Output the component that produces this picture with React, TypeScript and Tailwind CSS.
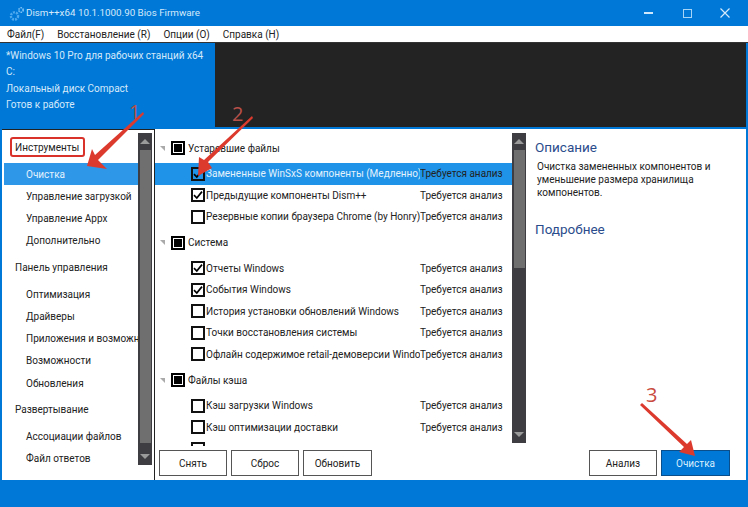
import React from "react";

type Sec = { kind: "s" | "i"; t: string; sel?: boolean };
const left: Sec[] = [
  { kind: "s", t: "Инструменты" },
  { kind: "i", t: "Очистка", sel: true },
  { kind: "i", t: "Управление загрузкой" },
  { kind: "i", t: "Управление Appx" },
  { kind: "i", t: "Дополнительно" },
  { kind: "s", t: "Панель управления" },
  { kind: "i", t: "Оптимизация" },
  { kind: "i", t: "Драйверы" },
  { kind: "i", t: "Приложения и возможности" },
  { kind: "i", t: "Возможности" },
  { kind: "i", t: "Обновления" },
  { kind: "s", t: "Развертывание" },
  { kind: "i", t: "Ассоциации файлов" },
  { kind: "i", t: "Файл ответов" },
];

type Row = { g?: boolean; t: string; c?: boolean; sel?: boolean };
const rows: Row[] = [
  { g: true, t: "Устаревшие файлы" },
  { t: "Замененные WinSxS компоненты (Медленно)", c: true, sel: true },
  { t: "Предыдущие компоненты Dism++", c: true },
  { t: "Резервные копии браузера Chrome (by Honry)" },
  { g: true, t: "Система" },
  { t: "Отчеты Windows", c: true },
  { t: "События Windows", c: true },
  { t: "История установки обновлений Windows" },
  { t: "Точки восстановления системы" },
  { t: "Офлайн содержимое retail-демоверсии Windows" },
  { g: true, t: "Файлы кэша" },
  { t: "Кэш загрузки Windows" },
  { t: "Кэш оптимизации доставки" },
  { t: "" },
];

function Scrollbar({ thumb }: { thumb: string }) {
  return (
    <div className="w-[14px] shrink-0 bg-[#3e3e42] flex flex-col items-center">
      <div className="h-[17px] shrink-0 flex items-center justify-center">
        <div className="w-0 h-0 border-l-[5px] border-r-[5px] border-b-[5px] border-l-transparent border-r-transparent border-b-[#9a9a9a]" />
      </div>
      <div className={`w-[11px] bg-[#6f6f6f] ${thumb}`} />
      <div className="flex-1" />
      <div className="h-[17px] shrink-0 flex items-center justify-center">
        <div className="w-0 h-0 border-l-[5px] border-r-[5px] border-t-[5px] border-l-transparent border-r-transparent border-t-[#9a9a9a]" />
      </div>
    </div>
  );
}

function Btn({ t, w, primary }: { t: string; w: string; primary?: boolean }) {
  return (
    <div
      className={`h-[26px] flex items-center justify-center border ${w} ${
        primary ? "bg-[#0078d7] border-[#0a4f8c] text-[#d8eefc]" : "bg-white border-[#555] text-[#222]"
      }`}
    >
      {t}
    </div>
  );
}

function Check() {
  return (
    <svg width="10" height="10" viewBox="0 0 10 10" fill="none">
      <path d="M1 5.2 L3.8 8 L9 1.6" stroke="#000" strokeWidth="1.7" />
    </svg>
  );
}

export default function App() {
  return (
    <div className="relative w-[748px] h-[507px] overflow-hidden bg-[#0078d7] flex flex-col font-['Roboto',sans-serif] text-[10px] text-[#222]">
      <div className="h-[26px] shrink-0 flex items-center pl-[8px] text-[#d4e9fa] text-[9.8px]">
        <svg width="17" height="17" viewBox="0 0 17 17" className="mr-[1px]">
          <circle cx="6.5" cy="11" r="3.6" fill="none" stroke="#4fa9ee" strokeWidth="2.4" strokeDasharray="2 1" />
          <circle cx="13" cy="5" r="2.2" fill="none" stroke="#7cc2f5" strokeWidth="1.6" strokeDasharray="1.4 0.8" />
        </svg>
        <span className="flex-1">Dism++x64 10.1.1000.90 Bios Firmware</span>
        <div className="flex items-center">
          <div className="w-[40px] flex justify-center">
            <div className="w-[9px] h-[2px] bg-[#cfe8fb]" />
          </div>
          <div className="w-[38px] flex justify-center">
            <div className="w-[9px] h-[9px] border-[1.5px] border-[#a5d4f7]" />
          </div>
          <div className="w-[42px] flex justify-center pr-[4px]">
            <svg width="10" height="10" viewBox="0 0 10 10">
              <path d="M0.5 0.5 L9.5 9.5 M9.5 0.5 L0.5 9.5" stroke="#d4e9fa" strokeWidth="1.2" />
            </svg>
          </div>
        </div>
      </div>
      <div className="h-[17px] shrink-0 bg-white flex items-center pl-[7px] gap-[13px] text-[#222] border-b border-[#333]">
        <span>Файл(F)</span>
        <span>Восстановление (R)</span>
        <span>Опции (O)</span>
        <span>Справка (H)</span>
      </div>
      <div className="h-[84px] shrink-0 flex pr-[2px]">
        <div className="w-[215px] shrink-0 pl-[6px] pt-[5px] text-[#d4e9fa] leading-[16.3px]">
          <div className="whitespace-nowrap">*Windows 10 Pro для рабочих станций x64</div>
          <div>C:</div>
          <div>Локальный диск Compact</div>
          <div>Готов к работе</div>
        </div>
        <div className="flex-1 bg-[#232323]" />
      </div>
      <div className="h-[351px] mt-[2px] shrink-0 flex mx-[2px] bg-white">
        <div className="w-[153px] shrink-0 flex pl-[2px] pt-[2px] pb-[15px] pr-[2px] border-t border-r border-[#222]">
          <div className="flex-1 min-w-0 overflow-hidden">
            {left.map((s) =>
              s.kind === "s" ? (
                <div key={s.t} className="h-[31px] flex items-center pl-[11px]">
                  {s.t}
                </div>
              ) : (
                <div
                  key={s.t}
                  className={`h-[22.25px] flex items-center pl-[22px] whitespace-nowrap ${
                    s.sel ? "bg-[#2f97e8] text-[#e3f2fd]" : ""
                  }`}
                >
                  {s.t}
                </div>
              )
            )}
          </div>
          <div className="flex pt-[1px]">
            <Scrollbar thumb="h-[293px]" />
          </div>
        </div>
        <div className="w-[372px] shrink-0 flex flex-col">
          <div className="h-[317px] shrink-0 flex">
            <div className="w-[357px] shrink-0 overflow-hidden pt-[4px]">
              {rows.map((r, i) =>
                r.g ? (
                  <div key={i} className="h-[30px] flex items-center pl-[5px]">
                    <div className="w-0 h-0 mr-[6px] border-l-[5px] border-t-[5px] border-l-transparent border-t-[#aaa]" />
                    <div className="w-[14px] h-[14px] mr-[3px] border-2 border-black bg-white flex items-center justify-center">
                      <div className="w-[8px] h-[8px] bg-black" />
                    </div>
                    <span>{r.t}</span>
                  </div>
                ) : (
                  <div
                    key={i}
                    className={`h-[21.5px] flex items-center pl-[36px] ${r.sel ? "bg-[#1f93e8]" : ""}`}
                  >
                    <div className="w-[14px] h-[14px] shrink-0 mr-[1px] border-2 border-[#111] flex items-center justify-center">
                      {r.c && <Check />}
                    </div>
                    {r.t && (
                      <>
                        <span className={`w-[214px] shrink-0 overflow-hidden whitespace-nowrap ${r.sel ? "text-[#e3f2fd]" : ""}`}>
                          {r.t}
                        </span>
                        <span className="whitespace-nowrap">Требуется анализ</span>
                      </>
                    )}
                  </div>
                )
              )}
            </div>
            <div className="flex pt-[4px] pb-[3px]">
              <Scrollbar thumb="h-[118px]" />
            </div>
          </div>
          <div className="flex gap-[4px] pl-[4px] pt-[4px]">
            <Btn t="Снять" w="w-[68px]" />
            <Btn t="Сброс" w="w-[68px]" />
            <Btn t="Обновить" w="w-[69px]" />
          </div>
        </div>
        <div className="flex-1 min-w-0 flex flex-col">
          <div className="h-[321px] shrink-0 pl-[8px] pt-[8px]">
            <div className="text-[13.5px] leading-[20px] text-[#2b4c8c]">Описание</div>
            <div className="pl-[2px] mt-[3px] leading-[13px] w-[190px]">
              Очистка замененных компонентов и уменьшение размера хранилища компонентов.
            </div>
            <div className="text-[13.5px] leading-[20px] text-[#2b4c8c] mt-[20px]">Подробнее</div>
          </div>
          <div className="flex justify-end gap-[4px] pr-[16px]">
            <Btn t="Анализ" w="w-[68px]" />
            <Btn t="Очистка" w="w-[69px]" primary />
          </div>
        </div>
      </div>
      {/* annotations */}
      <div className="absolute left-[10px] top-[137px] w-[75px] h-[20px] border-2 border-[#d8322a] rounded-[3px]" />
      <svg className="absolute left-0 top-0 pointer-events-none" width="748" height="507" viewBox="0 0 748 507">
        <g fill="#dd3a2e">
          <polygon points="143,112 144,114 98,160 107,169 87,166 92,149 95,155" />
          <polygon points="252,116 253,118 208,162 212,168 198,176 199,157 204,160" />
          <polygon points="642,403 640,405 684,447 679,452 695,456 691,440 687,444" />
        </g>
      </svg>
      <span className="absolute left-[129px] top-[100px] text-[20px] leading-[24px] text-[#b8504a] font-['Open_Sans',sans-serif]">1</span>
      <span className="absolute left-[232px] top-[102px] text-[20px] leading-[24px] text-[#b8504a] font-['Open_Sans',sans-serif]">2</span>
      <span className="absolute left-[646px] top-[383px] text-[20px] leading-[24px] text-[#c94a3e] font-['Open_Sans',sans-serif]">3</span>
    </div>
  );
}
